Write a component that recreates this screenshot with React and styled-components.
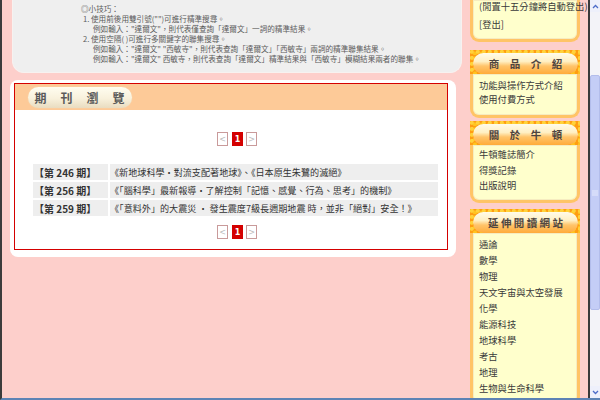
import React from 'react';
import styled, { createGlobalStyle } from 'styled-components';

const Global = createGlobalStyle`
  html, body { margin: 0; padding: 0; overflow: hidden; }
  body { font-family: "Noto Sans CJK TC", "Noto Sans", sans-serif; }
`;

const Frame = styled.div`
  width: 600px;
  height: 400px;
  box-sizing: border-box;
  display: flex;
  background: #fdcfcb;
  border-left: 2px solid #3c3c3c;
  border-bottom: 2px solid #5d83b5;
  overflow: hidden;
`;

const Main = styled.div`
  width: 452px;
  margin-left: 8px;
  display: flex;
  flex-direction: column;
`;

const TipsPanel = styled.div`
  height: 73px;
  margin-left: 2px;
  box-sizing: border-box;
  padding: 4px 0 0 68px;
  background: #efefef;
  border: 1px solid #f7f2f0;
  border-top: none;
  border-radius: 0 0 12px 12px;
`;

const Tip = styled.div`
  font-size: 7.6px;
  line-height: 10px;
  color: #5c5c5c;
  white-space: nowrap;
  padding-left: ${p => p.indent || 0}px;
`;

const BrowsePanel = styled.div`
  margin: 7px 6px 0 0;
  padding: 3px 8px 7px 4px;
  background: #fff;
  border-radius: 8px;
`;

const RedBox = styled.div`
  border: 1px solid #d40000;
  padding-bottom: 10px;
`;

const HeadBand = styled.div`
  height: 26px;
  background: #fdca98;
  padding: 3px 0 0 13px;
  box-sizing: border-box;
`;

const TitlePill = styled.div`
  width: 104px;
  height: 21px;
  border-radius: 11px;
  background: linear-gradient(to bottom, #fffdf0 0%, #f8f1dc 55%, #e9dcc0 100%);
  box-shadow: 0 0 1px #f3e6c8;
  display: flex;
  align-items: center;
  justify-content: center;
  font-size: 12px;
  font-weight: 700;
  color: #5a5a5a;
  letter-spacing: 1px;
`;

const Pager = styled.div`
  display: flex;
  justify-content: center;
  gap: 3px;
  padding-left: 12px;
  margin-top: ${p => p.top}px;
`;

const PageBtn = styled.div`
  width: 11px;
  height: 14px;
  box-sizing: border-box;
  border: 1px solid ${p => (p.active ? '#d40000' : '#c99a9a')};
  background: ${p => (p.active ? '#d40000' : '#fff')};
  color: ${p => (p.active ? '#fff' : '#bbb')};
  font-family: "DejaVu Sans", sans-serif;
  font-size: 8px;
  font-weight: ${p => (p.active ? 700 : 400)};
  display: flex;
  align-items: center;
  justify-content: center;
  margin-left: ${p => (p.active ? '1px' : 0)};
`;

const IssueTable = styled.div`
  margin: 18px 9px 0 18px;
  display: flex;
  flex-direction: column;
  gap: 2px;
`;

const IssueRow = styled.div`
  display: flex;
  gap: 2px;
  height: 16px;
`;

const IssueNo = styled.div`
  width: 74px;
  background: #eeeeee;
  font-size: 10px;
  font-weight: 700;
  color: #333;
  display: flex;
  align-items: center;
  padding-left: 1px;
  white-space: nowrap;
`;

const IssueTitle = styled.div`
  flex: 1;
  background: #eeeeee;
  font-size: 9.1px;
  color: #333;
  display: flex;
  align-items: center;
  white-space: nowrap;
`;

const Sidebar = styled.div`
  width: 110px;
  margin-left: 8px;
  display: flex;
  flex-direction: column;
`;

const SideBox = styled.div`
  background: #ffffcc;
  border: 3px solid #ffc466;
  border-top: none;
  border-radius: 0 0 9px 9px;
  box-shadow: inset 0 0 0 1px #f6ecc0;
  padding: ${p => p.pad};
`;

const SideItem = styled.div`
  font-size: 9.3px;
  line-height: ${p => p.lh || 16}px;
  color: #3a3a3a;
  padding-left: 6px;
  white-space: nowrap;
`;

const SideHead = styled.div`
  height: 27px;
  margin-top: ${p => p.top}px;
  box-sizing: border-box;
  padding: 3px 2px 0 3px;
  background-color: #ff9d12;
  background-image:
    radial-gradient(circle at 30% 30%, #ffd23c 0 1.5px, transparent 2.5px),
    radial-gradient(circle at 70% 70%, #ffc41f 0 1.5px, transparent 2.5px);
  background-size: 6px 6px, 7px 5px;
`;

const HeadPill = styled.div`
  height: 21px;
  border-radius: 11px;
  background: linear-gradient(to bottom, #fffbea 0%, #fff0c4 40%, #ffc46a 62%, #ffab3a 100%);
  display: flex;
  align-items: center;
  justify-content: center;
  font-size: 10.5px;
  font-weight: 700;
  color: #4e4540;
`;

const Scrollbar = styled.div`
  width: 12px;
  margin-left: 8px;
  box-sizing: border-box;
  border-left: 2px solid #3a3a3a;
  background: #f3f3f8;
  display: flex;
  flex-direction: column;
`;

const ArrowBtn = styled.div`
  height: 12px;
  display: flex;
  align-items: center;
  justify-content: center;
  background: #eef0fb;
`;

const Track = styled.div`
  flex: 1;
  display: flex;
  flex-direction: column;
  padding-top: 63px;
`;

const Thumb = styled.div`
  height: 233px;
  background: #c4cdf6;
  border: 1px solid #b3bdeb;
  border-radius: 2px;
  display: flex;
  align-items: center;
  justify-content: center;
`;

const Chevron = ({ down }) => (
  <svg width="7" height="5" viewBox="0 0 7 5">
    <path d={down ? 'M1 1 L3.5 3.5 L6 1' : 'M1 4 L3.5 1.5 L6 4'} stroke="#4d6cc8" strokeWidth="1.3" fill="none" />
  </svg>
);

const issues = [
  ['【第 246 期】', '《新地球科學‧對流支配著地球》、《日本原生朱鷺的滅絕》'],
  ['【第 256 期】', '《「腦科學」最新報導‧了解控制「記憶、感覺、行為、思考」的機制》'],
  ['【第 259 期】', '《「意料外」的大震災 ‧ 發生震度7級長週期地震 時，並非「絕對」安全！》'],
];

const reading = ['通論', '數學', '物理', '天文宇宙與太空發展', '化學', '能源科技', '地球科學', '考古', '地理', '生物與生命科學'];

const Pages = ({ top }) => (
  <Pager top={top}>
    <PageBtn>&lt;</PageBtn>
    <PageBtn active>1</PageBtn>
    <PageBtn>&gt;</PageBtn>
  </Pager>
);

export default function App() {
  return (
    <>
      <Global />
      <Frame>
        <Main>
          <TipsPanel>
            <Tip>◎小技巧：</Tip>
            <Tip indent={2}>1. 使用前後用雙引號("")可進行精準搜尋。</Tip>
            <Tip indent={12}>例如輸入："達爾文"，則代表僅查詢「達爾文」一詞的精準結果。</Tip>
            <Tip indent={2}>2. 使用空隔( )可進行多關鍵字的聯集搜尋。</Tip>
            <Tip indent={12}>例如輸入："達爾文" "西敏寺"，則代表查詢「達爾文」「西敏寺」兩詞的精準聯集結果。</Tip>
            <Tip indent={12}>例如輸入："達爾文" 西敏寺，則代表查詢「達爾文」精準結果與「西敏寺」模糊結果兩者的聯集。</Tip>
          </TipsPanel>
          <BrowsePanel>
            <RedBox>
              <HeadBand>
                <TitlePill>期　刊　瀏　覽</TitlePill>
              </HeadBand>
              <Pages top={22} />
              <IssueTable>
                {issues.map(([no, title]) => (
                  <IssueRow key={no}>
                    <IssueNo>{no}</IssueNo>
                    <IssueTitle>{title}</IssueTitle>
                  </IssueRow>
                ))}
              </IssueTable>
              <Pages top={9} />
            </RedBox>
          </BrowsePanel>
        </Main>
        <Sidebar>
          <SideBox pad="0 0 4px">
            <SideItem lh={13}>(閒置十五分鐘將自動登出)</SideItem>
            <SideItem lh={22}>[登出]</SideItem>
          </SideBox>
          <SideHead top={8}>
            <HeadPill>商　品　介　紹</HeadPill>
          </SideHead>
          <SideBox pad="4px 0 9px">
            <SideItem lh={14}>功能與操作方式介紹</SideItem>
            <SideItem lh={14}>使用付費方式</SideItem>
          </SideBox>
          <SideHead top={3}>
            <HeadPill>關　於　牛　頓</HeadPill>
          </SideHead>
          <SideBox pad="2px 0 6px">
            <SideItem lh={15.5}>牛頓雜誌簡介</SideItem>
            <SideItem lh={15.5}>得獎記錄</SideItem>
            <SideItem lh={15.5}>出版說明</SideItem>
          </SideBox>
          <SideHead top={6}>
            <HeadPill>延 伸 閱 讀 網 站</HeadPill>
          </SideHead>
          <SideBox pad="3px 0 6px">
            {reading.map(r => (
              <SideItem key={r} lh={16}>{r}</SideItem>
            ))}
          </SideBox>
        </Sidebar>
        <Scrollbar>
          <ArrowBtn><Chevron /></ArrowBtn>
          <Track>
            <Thumb>
              <svg width="6" height="6" viewBox="0 0 6 6">
                <path d="M0 1h6M0 3h6M0 5h6" stroke="#e6eafc" strokeWidth="1" />
              </svg>
            </Thumb>
          </Track>
          <ArrowBtn><Chevron down /></ArrowBtn>
        </Scrollbar>
      </Frame>
    </>
  );
}
